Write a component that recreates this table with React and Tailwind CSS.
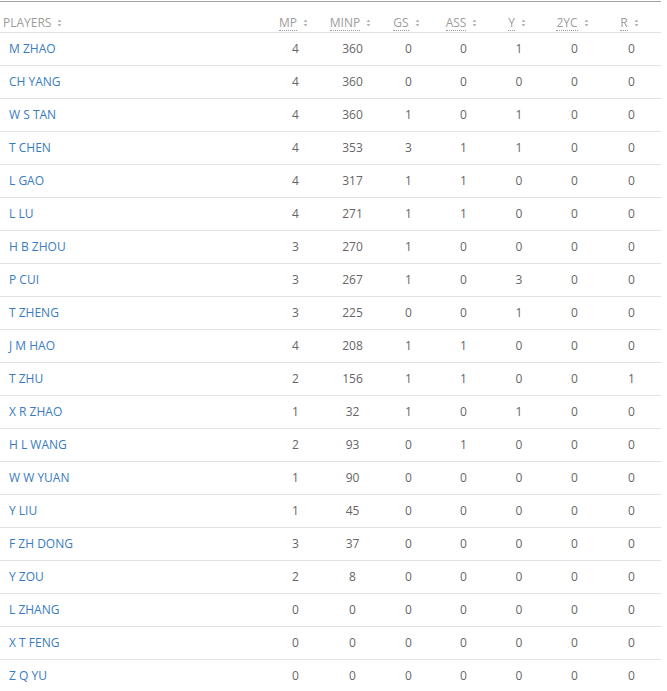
import React from 'react';

const players = [
  ['M ZHAO', 4, 360, 0, 0, 1, 0, 0],
  ['CH YANG', 4, 360, 0, 0, 0, 0, 0],
  ['W S TAN', 4, 360, 1, 0, 1, 0, 0],
  ['T CHEN', 4, 353, 3, 1, 1, 0, 0],
  ['L GAO', 4, 317, 1, 1, 0, 0, 0],
  ['L LU', 4, 271, 1, 1, 0, 0, 0],
  ['H B ZHOU', 3, 270, 1, 0, 0, 0, 0],
  ['P CUI', 3, 267, 1, 0, 3, 0, 0],
  ['T ZHENG', 3, 225, 0, 0, 1, 0, 0],
  ['J M HAO', 4, 208, 1, 1, 0, 0, 0],
  ['T ZHU', 2, 156, 1, 1, 0, 0, 1],
  ['X R ZHAO', 1, 32, 1, 0, 1, 0, 0],
  ['H L WANG', 2, 93, 0, 1, 0, 0, 0],
  ['W W YUAN', 1, 90, 0, 0, 0, 0, 0],
  ['Y LIU', 1, 45, 0, 0, 0, 0, 0],
  ['F ZH DONG', 3, 37, 0, 0, 0, 0, 0],
  ['Y ZOU', 2, 8, 0, 0, 0, 0, 0],
  ['L ZHANG', 0, 0, 0, 0, 0, 0, 0],
  ['X T FENG', 0, 0, 0, 0, 0, 0, 0],
  ['Z Q YU', 0, 0, 0, 0, 0, 0, 0],
];

const columns = [
  { key: 'MP', title: 'Matches played' },
  { key: 'MINP', title: 'Minutes played' },
  { key: 'GS', title: 'Goals scored' },
  { key: 'ASS', title: 'Assists' },
  { key: 'Y', title: 'Yellow cards' },
  { key: '2YC', title: 'Second yellow cards' },
  { key: 'R', title: 'Red cards' },
];

const grid = 'grid grid-cols-[267px_57px_57px_55px_55px_56px_55px_59px]';

const SortIcon = () => (
  <svg width="5" height="8" viewBox="0 0 5 8" className="ml-[6px] shrink-0" fill="#b5b5b5">
    <path d="M2.5 0.5 L4.5 3 L0.5 3 Z" />
    <path d="M2.5 7.5 L4.5 5 L0.5 5 Z" />
  </svg>
);

const App = () => {
  return (
    <div className="w-[661px] bg-white pt-px font-['Open_Sans',sans-serif] text-[12px]">
      <div className="border-t border-[#a3a3a3]">
        <div className={`${grid} h-[31px] border-b border-[#e2e2e2] text-[#9c9c9c]`}>
          <div className="flex items-center pl-[3px] pt-[12px]">
            PLAYERS
            <SortIcon />
          </div>
          {columns.map(col => (
            <div key={col.key} className="flex items-center justify-center pt-[12px] pr-[4px]">
              <abbr title={col.title} className="no-underline border-b border-dotted border-[#9c9c9c] leading-[14px]">
                {col.key}
              </abbr>
              <SortIcon />
            </div>
          ))}
        </div>
        {players.map(([name, ...stats]) => (
          <div key={name} className={`${grid} h-[33px] border-b border-[#e2e2e2]`}>
            <div className="flex items-center pl-[9px]">
              <a href="#" className="text-[#3a7cc1]">{name}</a>
            </div>
            {stats.map((value, i) => (
              <div key={i} className="flex items-center justify-center text-[#666]">
                {value}
              </div>
            ))}
          </div>
        ))}
      </div>
    </div>
  );
};

export default App;
